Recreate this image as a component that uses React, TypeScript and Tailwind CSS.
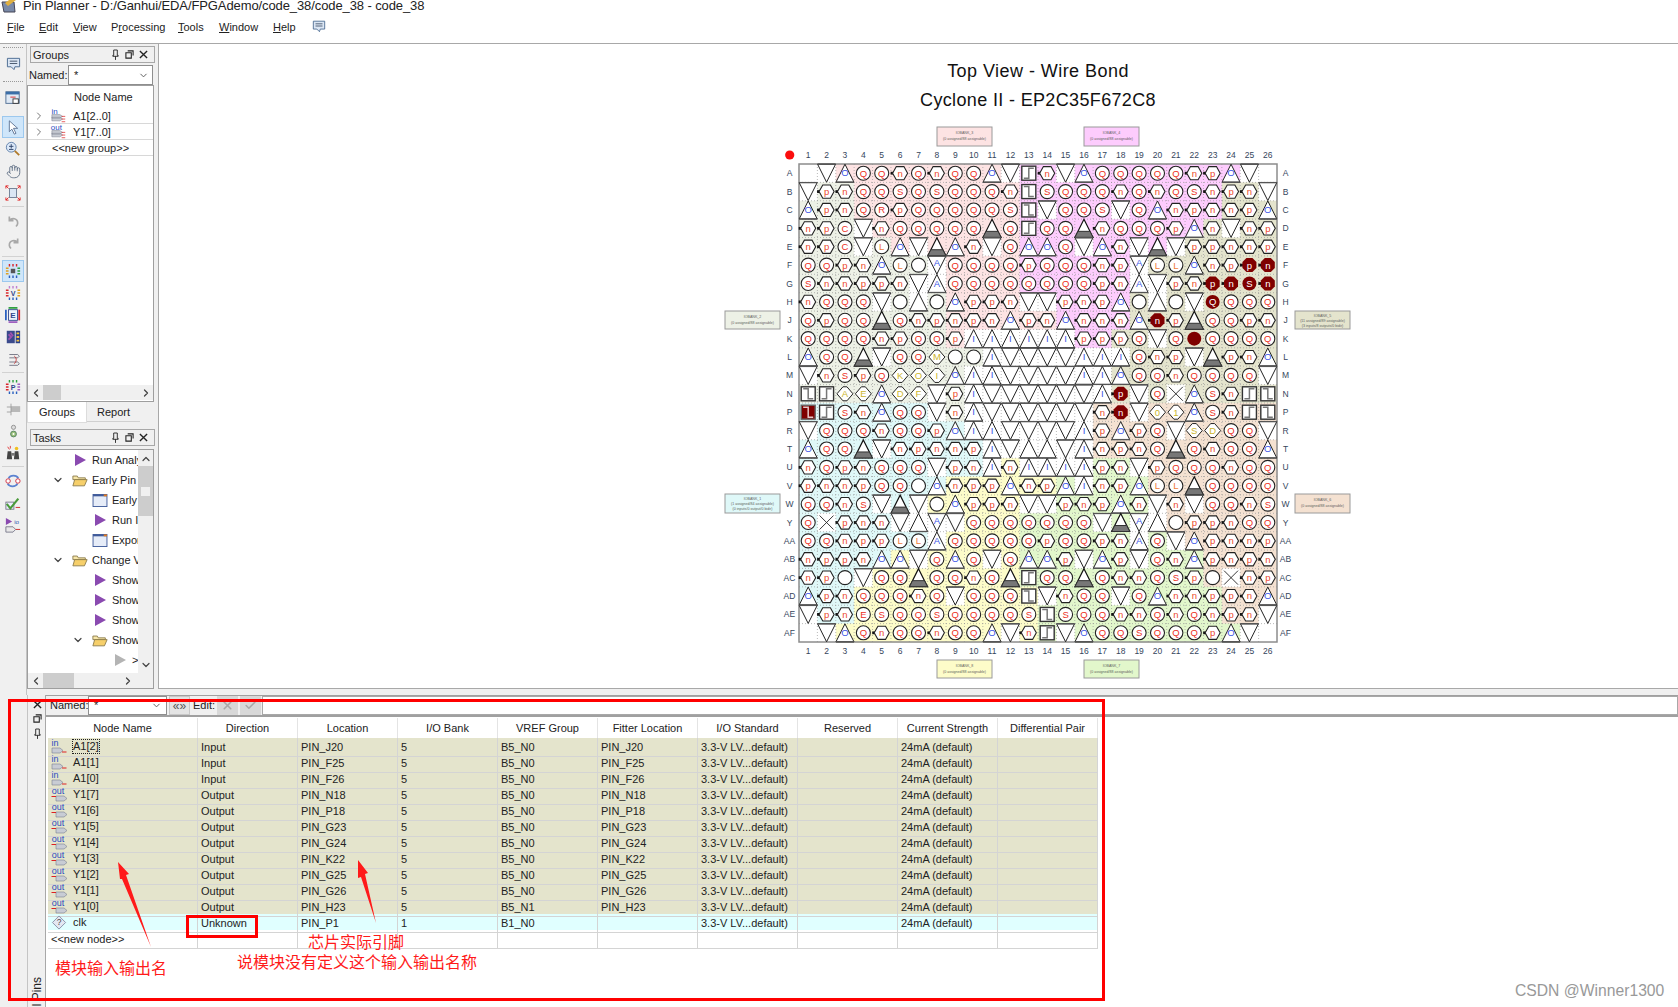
import React from 'react';
import { Check, ChevronDown, ChevronLeft, ChevronRight, ChevronUp, Hand, X } from 'lucide-react';

const FONT = "font-['Liberation_Sans',sans-serif]";

const CELL = 478 / 26;
const X0 = 799;
const Y0 = 164;

const ROW_NAMES = ['A', 'B', 'C', 'D', 'E', 'F', 'G', 'H', 'J', 'K', 'L', 'M', 'N', 'P', 'R', 'T', 'U', 'V', 'W', 'Y', 'AA', 'AB', 'AC', 'AD', 'AE', 'AF'];

// one token per ball: letter = circle, n/p = hex, u/v = triangles, g = ground, o = empty, x = nc, d* = diamond, N* = assigned
const PINS = [
  '. v uO Q Q n Q n Q Q uO v ckR n v uO Q Q Q Q Q n p uO v .',
  'v p n Q Q S Q S Q Q Q n ckF S Q Q Q n Q n Q S n p n v',
  'uO p n Q R p Q Q Q Q Q S ckF v Q Q S v Q uO n p n n p uO',
  'n p C v n Q Q Q Q Q g Q ckR Q Q g n Q Q Q p uO n v n p',
  'n p C v L uO v g uO n v Q uO uO Q v uO n v g v p p n n p',
  'Q Q p n uO L o vA Q Q Q Q p Q Q Q n p vA L L uO n p Np Nn',
  'S n n p p n v uA Q Q Q Q Q Q Q Q p n uA v p n Np Nn NS Nn',
  'n Q Q Q v o u o uO p p n v v p n p uO o u o v NQ Q Q Q',
  'Q p Q Q g Q n p n p n uO p n uO n n n uO Nn p g Q Q p n',
  'Q Q Q Q n p Q Q p uI uI uI uI uI uI p p p Q v Q N Q Q Q Q',
  'uO Q Q g v Q Q dM o o uI v v v v uI uI uI Q n p v g p n uO',
  'v n S p Q dK dO dI uO uI uI v v v v uI uI uO Q Q n Q Q Q Q v',
  'ckF ckR dA dE uO dD dF v p uI v v v v v v uI Np v Q x uO S n ckR ckF',
  'ckX ckR S n uO Q Q v n uI v v v v v v n Nn v d0 d1 uO S n ckR ckF',
  'v Q Q Q n Q Q p uO uI uI v v v v uI p uO p Q v dS dD Q Q v',
  'uO Q Q g v n p n n p uI v u u v uI n p n Q g Q n Q Q uO',
  'n Q p n Q Q Q v p n uI n uI uI uI uI p n v p Q Q Q n Q Q',
  'p n n p Q Q o uO n p p uO n p uO uI n p uO L L g Q Q Q Q',
  'Q Q n S v g v o uO p p n v v p n p uO n v n v Q Q n S',
  'Q x p n n v u vA v Q Q Q Q Q Q Q v g vA u o p p n Q Q',
  'Q Q n p p L L uA Q Q Q Q Q p Q Q p n uA Q v uO p n n p',
  'n p p n uO uO v Q uO Q v Q uO uO p v uO p v Q n uO p n p n',
  'n p o v Q Q g Q Q n Q g ckR Q Q g Q n n Q S p o x n p',
  'uO p n Q Q Q n Q v Q Q Q ckF v n Q Q v Q uO n n p p n uO',
  'v p n E S Q Q S Q Q Q Q S ckF S Q Q n n Q n Q n p n v',
  '. v uO Q n Q Q n Q Q uO v n ckR v uO Q Q S Q Q Q p uO v .',
].map((row) => row.split(' '));

const BANKS = [
  '0:2 3:10 4:12 0:2', '2:3 3:9 4:11 5:3', '2:3 3:9 4:11 5:3', '2:3 3:9 4:10 5:4',
  '2:5 3:7 4:8 5:6', '2:8 3:4 4:7 5:7', '2:8 3:4 4:7 5:7', '2:8 3:4 4:6 5:8',
  '2:8 3:6 4:4 5:8', '2:8 3:1 0:6 4:2 5:9', '2:10 0:8 5:8', '2:9 0:8 5:9',
  '2:9 0:8 5:9', '1:7 0:1 2:1 0:7 6:10', '1:9 0:7 6:10', '1:10 0:6 6:10',
  '1:11 8:1 0:4 7:3 6:7', '1:8 8:6 7:5 6:7', '1:7 8:5 0:2 7:6 6:6', '1:9 8:3 7:8 6:6',
  '1:8 8:4 7:9 6:5', '1:5 8:7 7:10 6:4', '1:3 8:9 7:10 6:4', '1:3 8:10 7:10 6:3',
  '1:3 8:10 7:10 6:3', '0:2 8:11 7:11 0:2',
].map((spec) => spec.split(' ').flatMap((part) => {
  const [bank, count] = part.split(':');
  return Array<string>(Number(count)).fill(bank);
}));

const BANK_FILL: Record<string, string> = {
  '0': '#ffffff', '1': '#dff8f8', '2': '#edf1e6', '3': '#fde3e3', '4': '#fdccfd',
  '5': '#e4e4cd', '6': '#f4e1d1', '7': '#e2f7cb', '8': '#fdfcc9',
};

const BANK_BOXES = [
  { x: 937, y: 127, h: 19, fill: '#fde3e3', lines: ['IOBANK_3', '(0 assigned/88 assignable)'] },
  { x: 1084, y: 127, h: 19, fill: '#fdccfd', lines: ['IOBANK_4', '(0 assigned/88 assignable)'] },
  { x: 725, y: 311, h: 18, fill: '#edf1e6', lines: ['IOBANK_2', '(0 assigned/88 assignable)'] },
  { x: 1295, y: 311, h: 18, fill: '#e4e4cd', lines: ['IOBANK_5', '(11 assigned/89 assignable)', '(3 inputs/8 outputs/0 bidir)'] },
  { x: 725, y: 494, h: 19, fill: '#dff8f8', lines: ['IOBANK_1', '(1 assigned/84 assignable)', '(0 inputs/0 output/0 bidir)'] },
  { x: 1295, y: 494, h: 19, fill: '#f4e1d1', lines: ['IOBANK_6', '(0 assigned/88 assignable)'] },
  { x: 937, y: 660, h: 18, fill: '#fdfcc9', lines: ['IOBANK_8', '(0 assigned/88 assignable)'] },
  { x: 1084, y: 660, h: 18, fill: '#e2f7cb', lines: ['IOBANK_7', '(0 assigned/88 assignable)'] },
];

const letterColor = (l: string) => {
  if (l === 'O' || l === 'I' || l === 'A') return '#3b55e6';
  if (l === 'L') return '#ef7d3c';
  return '#ec2f22';
};

function Label({ text, color, y = 3.4, size = 9.5 }: { text: string; color: string; y?: number; size?: number }) {
  return <text y={y} textAnchor="middle" fontSize={size} fill={color} fontFamily="Liberation Sans, sans-serif">{text}</text>;
}

function Pin({ t }: { t: string }) {
  if (t === '.') return null;
  const stroke = '#222';
  const hexPts = '-7.5,0 -3.8,-6.6 3.8,-6.6 7.5,0 3.8,6.6 -3.8,6.6';
  if (t === 'n' || t === 'p') {
    return (
      <g>
        <rect x={-9.5} y={-1.4} width={3} height={2.8} fill="#111" />
        <polygon points={hexPts} fill="#fff" stroke={stroke} strokeWidth={1.1} />
        <Label text={t} color="#ec4a2e" />
      </g>
    );
  }
  if (t === 'Nn' || t === 'Np') {
    return (
      <g>
        <rect x={-9.5} y={-1.4} width={3} height={2.8} fill="#111" />
        <polygon points="-7,-3 -3,-7 3,-7 7,-3 7,3 3,7 -3,7 -7,3" fill="#7f0000" />
        <Label text={t[1]} color="#fff" />
      </g>
    );
  }
  if (t === 'NS' || t === 'NQ' || t === 'N') {
    return (
      <g>
        <circle r={7} fill="#7f0000" />
        {t.length > 1 && <Label text={t[1]} color="#fff" />}
      </g>
    );
  }
  if (t === 'v' || t === 'vA') {
    return (
      <g>
        <polygon points="-9,-9 9,-9 0,9" fill="#fff" stroke={stroke} />
        <line x1={-9} y1={-9} x2={9} y2={-9} stroke="#555" strokeWidth={1.3} />
        {t === 'vA' && <Label text="A" color="#3b55e6" y={1} />}
      </g>
    );
  }
  if (t[0] === 'u') {
    return (
      <g>
        <polygon points="0,-9 9,9 -9,9" fill="#fff" stroke={stroke} />
        <line x1={-9} y1={9} x2={9} y2={9} stroke="#555" strokeWidth={1.3} />
        {t[1] && <Label text={t[1]} color="#3b55e6" y={3} />}
      </g>
    );
  }
  if (t === 'g') {
    return (
      <g>
        <polygon points="0,-9 9,9 -9,9" fill="#fff" stroke="#111" strokeWidth={1.2} />
        <polygon points="-6,3 6,3 9,9 -9,9" fill="#777" stroke="#333" />
      </g>
    );
  }
  if (t === 'o') return <circle r={7} fill="#fff" stroke={stroke} strokeWidth={1.1} />;
  if (t === 'x') {
    return (
      <g stroke="#222" strokeWidth={0.9}>
        <line x1={-7} y1={-7} x2={7} y2={7} />
        <line x1={7} y1={-7} x2={-7} y2={7} />
      </g>
    );
  }
  if (t.startsWith('ck')) {
    const filled = t === 'ckX';
    const rising = t === 'ckR';
    return (
      <g>
        <rect x={-7} y={-7} width={14} height={14} fill={filled ? '#7f0000' : '#fff'} stroke={filled ? '#666' : '#333'} strokeWidth={1.4} />
        <path d={rising ? 'M-5 5 H0 V-5 H5' : 'M-5 -5 H0 V5 H5'} fill="none" stroke={filled ? '#e6c8c8' : '#777'} strokeWidth={1.5} />
      </g>
    );
  }
  if (t[0] === 'd') {
    return (
      <g>
        <polygon points="-8,0 -2,-7 2,-7 8,0 2,7 -2,7" fill="#fff" stroke={stroke} />
        <Label text={t[1]} color="#cbb62e" />
      </g>
    );
  }
  return (
    <g>
      <circle r={7} fill="#fff" stroke={stroke} strokeWidth={1.1} />
      <Label text={t} color={letterColor(t)} />
    </g>
  );
}

function ChipDiagram() {
  const size = CELL * 26;
  return (
    <svg viewBox="658 120 760 565" className="block w-[760px] h-[565px]">
      {BANKS.map((row, r) => row.map((bank, c) => {
        const t = PINS[r][c];
        const white = t === 'v' || t === 'vA' || t === 'uI' || t === 'uA' || t === 'x' || t === 'u';
        return <rect key={`${r}-${c}`} x={X0 + c * CELL} y={Y0 + r * CELL} width={CELL + 0.3} height={CELL + 0.3} fill={white ? '#fff' : BANK_FILL[bank]} />;
      }))}
      {Array.from({ length: 25 }, (_, i) => (
        <g key={i} stroke="#8a8a8a" strokeWidth={0.6} strokeDasharray="1 2">
          <line x1={X0 + (i + 1) * CELL} y1={Y0} x2={X0 + (i + 1) * CELL} y2={Y0 + size} />
          <line x1={X0} y1={Y0 + (i + 1) * CELL} x2={X0 + size} y2={Y0 + (i + 1) * CELL} />
        </g>
      ))}
      <rect x={X0} y={Y0} width={size} height={size} fill="none" stroke="#8c8c8c" strokeWidth={1.5} />
      {PINS.map((row, r) => row.map((t, c) => (
        <g key={`${r}-${c}`} transform={`translate(${X0 + (c + 0.5) * CELL} ${Y0 + (r + 0.5) * CELL})`}>
          <Pin t={t} />
        </g>
      )))}
      <circle cx={789.7} cy={155} r={4.6} fill="#fb0d0d" />
      <g fontFamily="Liberation Sans, sans-serif" fontSize={8.5} fill="#35465c" textAnchor="middle">
        {Array.from({ length: 26 }, (_, i) => (
          <g key={i}>
            <text x={X0 + (i + 0.5) * CELL} y={158}>{i + 1}</text>
            <text x={X0 + (i + 0.5) * CELL} y={654}>{i + 1}</text>
          </g>
        ))}
        {ROW_NAMES.map((name, i) => (
          <g key={name}>
            <text x={789.5} y={Y0 + (i + 0.5) * CELL + 3}>{name}</text>
            <text x={1285.5} y={Y0 + (i + 0.5) * CELL + 3}>{name}</text>
          </g>
        ))}
      </g>
      {BANK_BOXES.map((box) => (
        <g key={box.lines[0]} fontFamily="Liberation Sans, sans-serif" fontSize={3.6} fill="#5f5f5f" textAnchor="middle">
          <rect x={box.x} y={box.y} width={55} height={box.h} fill={box.fill} stroke="#9a9a9a" strokeWidth={1} />
          {box.lines.map((line, i) => (
            <text key={line} x={box.x + 27.5} y={box.y + (box.lines.length === 3 ? 5.5 + i * 5.2 : 7 + i * 6.2)}>{line}</text>
          ))}
        </g>
      ))}
    </svg>
  );
}

// small toolbar glyphs
function Bubble({ className = 'w-[15px] h-[15px]' }: { className?: string }) {
  return (
    <svg viewBox="0 0 16 16" className={className}>
      <path d="M1.5 2.5h13v9h-5l-1 3-3-3h-4z" fill="#dbe6f4" stroke="#4a6a90" />
      <path d="M4 5.5h8M4 8h8" stroke="#44546a" />
    </svg>
  );
}

function PinGlyph() {
  return (
    <svg viewBox="0 0 10 12" className="w-[9px] h-[11px]">
      <path d="M3 1h4v6h1v1H2V7h1zM5 8v4" fill="none" stroke="#222" />
    </svg>
  );
}

function RestoreGlyph() {
  return (
    <svg viewBox="0 0 10 10" className="w-[9px] h-[9px]">
      <path d="M3 1h6v5M1 3h6v6H1z" fill="none" stroke="#222" strokeWidth={1.2} />
    </svg>
  );
}

function CloseGlyph() {
  return (
    <svg viewBox="0 0 10 10" className="w-[9px] h-[9px]">
      <path d="M1 1l8 8M9 1l-8 8" stroke="#222" strokeWidth={1.5} />
    </svg>
  );
}

function ChipTool({ mid, a, b, c, d }: { mid: string; a: string; b: string; c: string; d: string }) {
  return (
    <svg viewBox="0 0 18 18" className="w-[16px] h-[16px]">
      <path d="M5 1v3M9 1v3M13 1v3" stroke={a} strokeWidth={1.6} />
      <path d="M1 6h3M1 9h3M1 12h3" stroke={b} strokeWidth={1.6} />
      <path d="M14 6h3M14 9h3M14 12h3" stroke={c} strokeWidth={1.6} />
      <path d="M5 14v3M9 14v3M13 14v3" stroke={d} strokeWidth={1.6} />
      <text x={9} y={12} textAnchor="middle" fontSize={8} fontWeight={700} fill="#30468c" fontFamily="Liberation Sans, sans-serif">{mid}</text>
    </svg>
  );
}

const TOP_TOOL = (
  <svg viewBox="0 0 18 18" className="w-[16px] h-[16px]"><rect x="1" y="2" width="15" height="13" fill="#dfe9f5" stroke="#4a6a90" /><rect x="1" y="2" width="15" height="3" fill="#3a6ea8" /><rect x="9" y="10" width="6" height="5" fill="#fff" stroke="#333" /><path d="M6 8h6" stroke="#d22" /></svg>
);

const TOOL_GROUPS: React.ReactNode[][] = [
  [
    <svg key="b" viewBox="0 0 18 18" className="w-[15px] h-[15px]"><path d="M4 1l10 9H9l3 6-2 1-3-6-3 3z" fill="#fff" stroke="#51688a" /></svg>,
    <svg key="c" viewBox="0 0 18 18" className="w-[16px] h-[16px]"><circle cx="7" cy="7" r="5.5" fill="#dbe8f8" stroke="#5a7ba6" /><path d="M4.5 6h5M7 3.5v5M4.5 9.5h5" stroke="#2a3f66" /><path d="M11 11l5 5" stroke="#b07a2a" strokeWidth="2" /></svg>,
    <Hand key="d" className="w-[15px] h-[15px] text-[#5a6a80]" strokeWidth={1.4} />,
    <svg key="e" viewBox="0 0 18 18" className="w-[16px] h-[16px]"><rect x="5" y="4" width="8" height="10" fill="#dbe6f4" stroke="#6a7a90" /><path d="M1 1l3 3M17 1l-3 3M1 17l3-3M17 17l-3-3M1 1h3M1 1v3M17 1h-3M17 1v3M1 17h3M1 17v-3M17 17h-3M17 17v-3" stroke="#e02020" /></svg>,
  ],
  [
    <svg key="f" viewBox="0 0 18 18" className="w-[15px] h-[15px]"><path d="M4 3v5h5M4 8c3-4 10-3 10 3 0 2-1 3-2 4" fill="none" stroke="#a8a8a8" strokeWidth="2" /></svg>,
    <svg key="g" viewBox="0 0 18 18" className="w-[15px] h-[15px]"><path d="M14 3v5H9M14 8c-3-4-10-3-10 3 0 2 1 3 2 4" fill="none" stroke="#a8a8a8" strokeWidth="2" /></svg>,
  ],
  [
    <svg key="h" viewBox="0 0 18 18" className="w-[16px] h-[16px]"><path d="M5 1v3M9 1v3M13 1v3" stroke="#d8262c" strokeWidth="1.6" /><path d="M1 6h3M1 9h3M1 12h3" stroke="#e0a020" strokeWidth="1.6" /><path d="M14 6h3M14 9h3M14 12h3" stroke="#30a040" strokeWidth="1.6" /><path d="M5 14v3M9 14v3M13 14v3" stroke="#2a60c0" strokeWidth="1.6" /><rect x="6.5" y="6.5" width="5" height="5" fill="#555" /></svg>,
    <ChipTool key="i" mid="V" a="#c080d0" b="#d8262c" c="#e0a020" d="#2a60c0" />,
    <svg key="j" viewBox="0 0 18 18" className="w-[16px] h-[16px]"><rect x="4" y="3" width="10" height="12" fill="#eef3fa" stroke="#30468c" /><text x="9" y="12.5" textAnchor="middle" fontSize="9" fontWeight="700" fill="#30468c" fontFamily="Liberation Sans, sans-serif">E</text><path d="M1 3v12" stroke="#2a60c0" strokeWidth="2" /><path d="M16 3v12" stroke="#d8262c" strokeWidth="2" /><path d="M4 1h10" stroke="#30a040" strokeWidth="2" /><path d="M4 17h10" stroke="#a060c0" strokeWidth="2" /></svg>,
    <svg key="k" viewBox="0 0 18 18" className="w-[16px] h-[16px]"><rect x="2" y="2" width="9" height="14" fill="#3a4a8c" /><path d="M4 6l3 3-3 3M6 4l3 4" stroke="#a050b0" strokeWidth="2" fill="none" /><rect x="12" y="2" width="5" height="14" fill="#2a3f88" /><path d="M13 5h3M13 9h3M13 13h3" stroke="#f0c040" strokeWidth="2" /></svg>,
    <svg key="l" viewBox="0 0 18 18" className="w-[15px] h-[15px]"><path d="M4 3h10l2 2-2 2H4M4 12h10l2 2-2 2H4" fill="#eee" stroke="#667" /><path d="M10 5c3 2 3 6 0 9" fill="none" stroke="#c02020" /></svg>,
  ],
  [
    <ChipTool key="m" mid="P" a="#30a040" b="#d8262c" c="#a060c0" d="#2a60c0" />,
    <svg key="n" viewBox="0 0 18 18" className="w-[15px] h-[15px]"><rect x="6" y="5" width="11" height="7" fill="#b8b8b8" /><path d="M6 2v14M1 6h5M1 12h5" stroke="#999" /></svg>,
    <svg key="o" viewBox="0 0 18 18" className="w-[15px] h-[15px]"><circle cx="9" cy="4" r="2.5" fill="#ddd" stroke="#888" /><circle cx="9" cy="12" r="3.5" fill="#9ac07a" stroke="#4a7a5a" /><circle cx="9" cy="12" r="1.2" fill="#fff" /></svg>,
    <svg key="p" viewBox="0 0 18 18" className="w-[16px] h-[16px]"><path d="M3 7h4l1 9H2zM11 7h4l1 9h-6z" fill="#444" /><rect x="7" y="9" width="4" height="3" fill="#777" /><path d="M3 2l2 3M6 1v3" stroke="#e03030" /><circle cx="13" cy="4" r="2" fill="#f0c020" /></svg>,
  ],
  [
    <svg key="q" viewBox="0 0 18 18" className="w-[16px] h-[16px]"><path d="M4 6c2-4 9-4 11 0M14 12c-2 4-9 4-11 0" fill="none" stroke="#5a82d0" strokeWidth="2" /><circle cx="3.5" cy="9" r="2.5" fill="#fff" stroke="#d02a3a" /><circle cx="14.5" cy="9" r="2.5" fill="#fff" stroke="#d02a3a" /></svg>,
    <svg key="r" viewBox="0 0 18 18" className="w-[16px] h-[16px]"><rect x="1" y="8" width="9" height="8" fill="#eef" stroke="#778" /><path d="M2 10l4 5 9-11" fill="none" stroke="#4a9a3a" strokeWidth="2.4" /><path d="M12 14h5" stroke="#d02020" /></svg>,
    <svg key="s" viewBox="0 0 18 18" className="w-[16px] h-[16px]"><path d="M1 1l7 4-7 4z" fill="#8a4ab0" /><path d="M1 11h8l3 3-3 3H1z" fill="#e8e8e8" stroke="#778" /><path d="M12 14h5" stroke="#d02020" /><text x="13" y="8" textAnchor="middle" fontSize="7" fill="#3a5ab0" fontFamily="Liberation Sans, sans-serif">io</text></svg>,
  ],
];

function LeftToolbar() {
  return (
    <div className="w-[27px] shrink-0 border-r border-[#c4c4c4] bg-[#f0f0f0] flex flex-col items-center">
      <div className="h-[2px] w-[20px] mt-[3px] border-t border-dotted border-[#9a9a9a]" />
      <div className="h-[26px] flex items-center mt-[1px]"><Bubble /></div>
      <div className="h-[2px] w-[20px] mt-[5px] mb-[4px] border-t border-dotted border-[#9a9a9a]" />
      <div className="w-[22px] h-[22px] mb-[7px] flex items-center justify-center">{TOP_TOOL}</div>
      {TOOL_GROUPS.map((group, g) => (
        <div key={g} className={g > 0 ? 'mt-[2px] pt-[3px] w-[22px] border-t border-[#d2d2d2] flex flex-col items-center' : 'flex flex-col items-center'}>
          {group.map((icon, i) => {
            const active = (g === 0 && i === 0) || (g === 2 && i === 0);
            return (
              <div key={i} className={`w-[22px] h-[22px] flex items-center justify-center border ${active ? 'bg-[#cfe6fa] border-[#9cc8ee]' : 'border-transparent'}`}>
                {icon}
              </div>
            );
          })}
        </div>
      ))}
    </div>
  );
}

function PanelHeader({ title }: { title: string }) {
  return (
    <div className="mx-[3px] h-[17px] px-[2px] border border-[#a8a8a8] bg-[#f0f0f0] flex items-center text-[#222]">
      <span className="flex-1 pt-[2px]">{title}</span>
      <span className="flex items-center gap-[5px] pr-[4px]"><PinGlyph /><RestoreGlyph /><CloseGlyph /></span>
    </div>
  );
}

function Scrollbar({ thumb, left, right }: { thumb: number; left: number; right: number }) {
  return (
    <div className="h-[15px] bg-[#f0f0f0] flex items-center">
      <ChevronLeft className="ml-[2px] w-[12px] h-[12px] text-[#444]" strokeWidth={2.5} />
      <div className="bg-[#cdcdcd] h-[15px]" style={{ marginLeft: left, width: thumb }} />
      <div className="flex-1" />
      <ChevronRight className="w-[12px] h-[12px] text-[#444]" strokeWidth={2.5} style={{ marginRight: right }} />
    </div>
  );
}

function GroupIcon({ out }: { out?: boolean }) {
  return (
    <svg viewBox="0 0 18 16" className="w-[16px] h-[15px] shrink-0 overflow-visible">
      <text x={out ? 6 : 4} y={6} textAnchor="middle" fontSize={9} fill="#2a4ac0" fontFamily="Liberation Sans, sans-serif">{out ? 'out' : 'in'}</text>
      <path d="M1 7h9l3 2-3 2H1zM1 10h9l3 2-3 2H1z" fill="#c8ccd4" stroke="#7a8090" strokeWidth={0.6} />
      <path d="M12 9h4M12 12h4M12 15h4" stroke="#d22" strokeWidth={0.8} />
    </svg>
  );
}

const TASKS: { kind: 'run' | 'folder' | 'win' | 'gray'; level: number; label: string }[] = [
  { kind: 'run', level: 0, label: 'Run Analysis' },
  { kind: 'folder', level: 0, label: 'Early Pin Planning' },
  { kind: 'win', level: 1, label: 'Early Pin Planning...' },
  { kind: 'run', level: 1, label: 'Run I/O Assignment' },
  { kind: 'win', level: 1, label: 'Export Pin Assignments' },
  { kind: 'folder', level: 0, label: 'Change View' },
  { kind: 'run', level: 1, label: 'Show Pads' },
  { kind: 'run', level: 1, label: 'Show Pin' },
  { kind: 'run', level: 1, label: 'Show Bank' },
  { kind: 'folder', level: 1, label: 'Show Other' },
  { kind: 'gray', level: 2, label: '>' },
];

function TaskIcon({ kind }: { kind: string }) {
  if (kind === 'folder') {
    return (
      <svg viewBox="0 0 18 14" className="w-[16px] h-[13px]">
        <path d="M1 2h5l1 2h8v2H1z" fill="#f7e6a8" stroke="#8a7a4a" />
        <path d="M3 6h14l-3 7H1z" fill="#f6cf6a" stroke="#8a7a4a" />
      </svg>
    );
  }
  if (kind === 'win') {
    return (
      <svg viewBox="0 0 16 14" className="w-[16px] h-[13px]">
        <rect x="0.5" y="0.5" width="15" height="13" fill="#e6ecf8" stroke="#3f5a9a" />
        <rect x="0.5" y="0.5" width="15" height="2" fill="#3f5a9a" />
        <rect x="12" y="0.5" width="3.5" height="2" fill="#e07a20" />
      </svg>
    );
  }
  return (
    <svg viewBox="0 0 11 12" className="w-[11px] h-[12px]">
      <path d="M0 0l11 6-11 6z" fill={kind === 'gray' ? '#b4b4b4' : '#8a4ab0'} />
    </svg>
  );
}

function LeftPanel() {
  return (
    <div className="w-[131px] shrink-0 bg-[#f0f0f0] flex flex-col text-[11px] text-[#222]">
      <div className="h-[2px]" />
      <PanelHeader title="Groups" />
      <div className="h-[22px] flex items-center pl-[2px] pt-[2px]">
        <span className="w-[39px]">Named:</span>
        <div className="w-[85px] h-[20px] bg-white border border-[#8e8e8e] flex items-center pl-[5px]">
          <span className="flex-1">*</span>
          <ChevronDown className="w-[11px] h-[11px] mr-[3px] text-[#555]" />
        </div>
      </div>
      <div className="h-[317px] w-[127px] bg-white border border-[#9e9e9e] flex flex-col pb-[1px]">
        <div className="h-[22px] pl-[46px] flex items-center">Node Name</div>
        {[
          { label: 'A1[2..0]', out: false },
          { label: 'Y1[7..0]', out: true },
        ].map((row) => (
          <div key={row.label} className="h-[16px] border-b border-[#d8d8d8] flex items-center">
            <ChevronRight className="ml-[5px] w-[12px] h-[12px] text-[#777]" />
            <span className="ml-[6px]"><GroupIcon out={row.out} /></span>
            <span className="ml-[6px] pt-[2px]">{row.label}</span>
          </div>
        ))}
        <div className="h-[16px] border-b border-[#d8d8d8] pl-[24px] pt-[1px] flex items-center">&lt;&lt;new group&gt;&gt;</div>
        <div className="flex-1" />
        <Scrollbar thumb={18} left={1} right={1} />
      </div>
      <div className="h-[27px] flex items-start">
        <div className="w-[60px] h-[21px] pt-[1px] bg-white border border-t-0 border-[#dcdcdc] flex items-center justify-center">Groups</div>
        <div className="w-[53px] h-[20px] pt-[1px] border-b border-[#d0d0d0] flex items-center justify-center">Report</div>
      </div>
      <PanelHeader title="Tasks" />
      <div className="mt-[3px] h-[240px] w-[127px] bg-white border border-[#9e9e9e] flex flex-col">
        <div className="flex flex-1 min-h-0">
          <div className="flex-1 overflow-hidden">
            {TASKS.map((task) => (
              <div key={task.label} className="h-[20px] flex items-center whitespace-nowrap" style={{ paddingLeft: 22 + task.level * 20 }}>
                <span className="w-[16px] shrink-0 flex justify-center">
                  {task.kind === 'folder' && <ChevronDown className="w-[12px] h-[12px] text-[#444]" strokeWidth={2.4} />}
                </span>
                <span className="ml-[5px] w-[18px] shrink-0 flex justify-center"><TaskIcon kind={task.kind} /></span>
                <span className="ml-[3px]">{task.label}</span>
              </div>
            ))}
          </div>
          <div className="w-[15px] shrink-0 bg-[#f0f0f0] flex flex-col items-center">
            <ChevronUp className="w-[12px] h-[12px] mt-[3px] text-[#444]" strokeWidth={2.4} />
            <div className="w-full h-[50px] mt-[1px] bg-[#cdcdcd] flex items-center justify-center"><div className="w-[9px] h-[9px] bg-[#f0f0f0]" /></div>
            <div className="flex-1" />
            <ChevronDown className="w-[12px] h-[12px] mb-[2px] text-[#444]" strokeWidth={2.4} />
          </div>
        </div>
        <Scrollbar thumb={31} left={1} right={19} />
      </div>
    </div>
  );
}

const COLUMNS = ['Node Name', 'Direction', 'Location', 'I/O Bank', 'VREF Group', 'Fitter Location', 'I/O Standard', 'Reserved', 'Current Strength', 'Differential Pair'];

const NODES = [
  { name: 'A1[2]', dir: 'Input', loc: 'PIN_J20', vref: 'B5_N0' },
  { name: 'A1[1]', dir: 'Input', loc: 'PIN_F25', vref: 'B5_N0' },
  { name: 'A1[0]', dir: 'Input', loc: 'PIN_F26', vref: 'B5_N0' },
  { name: 'Y1[7]', dir: 'Output', loc: 'PIN_N18', vref: 'B5_N0' },
  { name: 'Y1[6]', dir: 'Output', loc: 'PIN_P18', vref: 'B5_N0' },
  { name: 'Y1[5]', dir: 'Output', loc: 'PIN_G23', vref: 'B5_N0' },
  { name: 'Y1[4]', dir: 'Output', loc: 'PIN_G24', vref: 'B5_N0' },
  { name: 'Y1[3]', dir: 'Output', loc: 'PIN_K22', vref: 'B5_N0' },
  { name: 'Y1[2]', dir: 'Output', loc: 'PIN_G25', vref: 'B5_N0' },
  { name: 'Y1[1]', dir: 'Output', loc: 'PIN_G26', vref: 'B5_N0' },
  { name: 'Y1[0]', dir: 'Output', loc: 'PIN_H23', vref: 'B5_N1' },
];

function NodeIcon({ dir }: { dir: string }) {
  if (dir === 'Unknown') {
    return (
      <svg viewBox="0 0 16 16" className="w-[16px] h-[15px]">
        <path d="M8 1l7 7-7 7-7-7z" fill="#e4e8f2" stroke="#8890a8" />
        <text x="8" y="11" textAnchor="middle" fontSize="9" fill="#444" fontFamily="Liberation Sans, sans-serif">?</text>
      </svg>
    );
  }
  const isIn = dir === 'Input';
  return (
    <svg viewBox="0 0 16 16" className="w-[16px] h-[16px]">
      <text x={isIn ? 4 : 7} y={7} textAnchor="middle" fontSize={9} fill="#2a4ac0" fontFamily="Liberation Sans, sans-serif">{isIn ? 'in' : 'out'}</text>
      {isIn ? (
        <>
          <path d="M1 9h8l3 2.5L9 14H1z" fill="#c8ccd4" stroke="#7a8090" strokeWidth={0.6} />
          <path d="M11 13h4.5" stroke="#d22" />
        </>
      ) : (
        <>
          <path d="M5 9h8l3 2.5-3 2.5H5z" fill="#c8ccd4" stroke="#7a8090" strokeWidth={0.6} />
          <path d="M0.5 9.5h4.5" stroke="#d22" />
        </>
      )}
    </svg>
  );
}

function TableRow({ node, bg, bank, fitter }: { node: (typeof NODES)[number]; bg: string; bank: string; fitter: string }) {
  const cells = [node.dir, node.loc, bank, node.vref, fitter, '3.3-V LV...default)', '', '24mA (default)', ''];
  return (
    <div className={`grid grid-cols-[150px_repeat(9,100px)] h-[16px] ${bg}`}>
      <div className="border-r border-b border-[#d4d4d4] flex items-center pl-[3px]">
        <NodeIcon dir={node.dir} />
        <span className={`ml-[6px] leading-[13px] ${node.name === 'A1[2]' ? 'outline-1 outline-dotted outline-[#222]' : ''}`}>{node.name}</span>
      </div>
      {cells.map((cell, i) => (
        <div key={i} className="border-r border-b border-[#d4d4d4] pl-[3px] pt-[1px] flex items-center whitespace-nowrap">{cell}</div>
      ))}
    </div>
  );
}

function BottomPanel() {
  return (
    <div className="h-[312px] flex bg-[#f0f0f0] text-[11px] text-[#222]">
      <div className="w-[28px] shrink-0 border-r border-[#c4c4c4]" />
      <div className="w-[18px] shrink-0 border-r border-[#a8a8a8] flex flex-col items-center pl-[1px] pt-[5px] gap-[5px]">
        <CloseGlyph />
        <RestoreGlyph />
        <PinGlyph />
        <div className="mt-auto -mb-[10px] [writing-mode:vertical-rl] rotate-180 text-[12px] leading-[14px] whitespace-nowrap">All Pins</div>
      </div>
      <div className="flex-1 min-w-0 flex flex-col border-t border-[#a0a0a0]">
        <div className="h-[19px] flex items-center pl-[4px]">
          <span className="w-[38px]">Named:</span>
          <div className="w-[79px] h-[19px] bg-white border border-[#8e8e8e] flex items-center pl-[5px]">
            <span className="flex-1">*</span>
            <ChevronDown className="w-[11px] h-[11px] mr-[4px] text-[#555]" />
          </div>
          <div className="ml-[2px] w-[21px] h-[19px] bg-[#e4e4e4] border border-[#c8c8c8] flex items-center justify-center text-[#555] text-[12px]">&laquo;&raquo;</div>
          <span className="ml-[3px] w-[22px]">Edit:</span>
          <div className="ml-[2px] w-[21px] h-[19px] bg-[#d8d8d8] flex items-center justify-center"><X className="w-[13px] h-[13px] text-[#a8a8a8]" strokeWidth={3} /></div>
          <div className="ml-[2px] w-[21px] h-[19px] bg-[#d8d8d8] flex items-center justify-center"><Check className="w-[13px] h-[13px] text-[#a8a8a8]" strokeWidth={3} /></div>
          <div className="ml-[1px] flex-1 h-[19px] bg-white border border-[#a8a8a8]" />
        </div>
        <div className="h-[1px] bg-[#a0a0a0]" />
        <div className="flex-1 bg-white pl-[2px] border-t border-[#a0a0a0]">
          <div className="w-[1050px]">
            <div className="grid grid-cols-[150px_repeat(9,100px)] h-[21px] border-t border-white">
              {COLUMNS.map((col) => (
                <div key={col} className="border-r border-[#e4e4e4] flex items-center justify-center">{col}</div>
              ))}
            </div>
            {NODES.map((node) => (
              <TableRow key={node.name} node={node} bg="bg-[#e4e4cc]" bank="5" fitter={node.loc} />
            ))}
            <TableRow node={{ name: 'clk', dir: 'Unknown', loc: 'PIN_P1', vref: 'B1_N0' }} bg="bg-[#e0ffff]" bank="1" fitter="" />
            <div className="grid grid-cols-[150px_repeat(9,100px)] h-[16px]">
              <div className="border-r border-b border-[#d4d4d4] pl-[3px] pt-[1px] flex items-center">&lt;&lt;new node&gt;&gt;</div>
              {Array.from({ length: 9 }, (_, i) => <div key={i} className="border-r border-b border-[#d4d4d4]" />)}
            </div>
          </div>
        </div>
      </div>
    </div>
  );
}

const MENU = [
  { pre: '', key: 'F', post: 'ile', w: 32 },
  { pre: '', key: 'E', post: 'dit', w: 34 },
  { pre: '', key: 'V', post: 'iew', w: 38 },
  { pre: 'P', key: 'r', post: 'ocessing', w: 67 },
  { pre: '', key: 'T', post: 'ools', w: 41 },
  { pre: '', key: 'W', post: 'indow', w: 54 },
  { pre: '', key: 'H', post: 'elp', w: 39 },
];

export default function App() {
  return (
    <div className={`relative w-[1678px] h-[1007px] overflow-hidden bg-white flex flex-col ${FONT}`}>
      {/* Title bar, cut off at the top of the capture */}
      <div className="h-[16px] flex items-center overflow-hidden text-[13px] text-[#222] whitespace-nowrap">
        <svg viewBox="0 0 16 16" className="w-[16px] h-[16px] -mt-[6px] ml-[1px]">
          <path d="M1 5h12l1 10H3z" fill="#7a8aa8" stroke="#445" />
          <path d="M4 6l8-6 3 3-8 6z" fill="#e0b040" />
        </svg>
        <span className="ml-[6px] -mt-[4px] tracking-[-0.1px]">Pin Planner - D:/Ganhui/EDA/FPGAdemo/code_38/code_38 - code_38</span>
      </div>

      <div className="h-[28px] flex items-center pl-[7px] pb-[4px] text-[11px] text-[#222] border-b border-[#a8a8a8]">
        {MENU.map((m) => (
          <span key={m.post} className="shrink-0" style={{ width: m.w }}>{m.pre}<u>{m.key}</u>{m.post}</span>
        ))}
        <Bubble className="w-[14px] h-[14px] -mt-[4px]" />
      </div>

      <div className="h-[651px] flex bg-[#f0f0f0]">
        <LeftToolbar />
        <LeftPanel />
        <div className="flex-1 h-[645px] bg-white border-l border-b border-[#a8a8a8]">
          <div className="w-[760px] ml-[499px] text-center text-[#111] text-[18px] leading-[29px]">
            <div className="pt-[13px] h-[42px] tracking-[0.45px]">Top View - Wire Bond</div>
            <div className="h-[29px] tracking-[0.35px]">Cyclone II - EP2C35F672C8</div>
            <div className="h-[5px]" />
            <ChipDiagram />
          </div>
        </div>
      </div>

      <BottomPanel />

      {/* Red annotations drawn over the screenshot */}
      <div className="absolute left-[8px] top-[699px] w-[1097px] h-[302px] border-[3px] border-[#ff0000]" />
      <div className="absolute left-[186px] top-[915px] w-[72px] h-[23px] border-[3px] border-[#ff0000]" />
      <svg className="absolute left-0 top-0 w-[1678px] h-[1007px] pointer-events-none" viewBox="0 0 1678 1007">
        <polygon points="118,862 129,874 126,875 151,947 122,879 120,879" fill="#ff1a1a" />
        <polygon points="358,860 368,873 365,874 376,923 361,877 358,878" fill="#ff1a1a" />
      </svg>
      <div className="absolute left-[308px] top-[930px] text-[16px] leading-[22px] text-[#ff1a1a] font-['Noto_Sans_CJK_SC',sans-serif]">芯片实际引脚</div>
      <div className="absolute left-[237px] top-[950px] text-[16px] leading-[22px] text-[#ff1a1a] font-['Noto_Sans_CJK_SC',sans-serif]">说模块没有定义这个输入输出名称</div>
      <div className="absolute left-[55px] top-[956px] text-[16px] leading-[22px] text-[#ff1a1a] font-['Noto_Sans_CJK_SC',sans-serif]">模块输入输出名</div>
      <div className="absolute left-[1515px] top-[982px] text-[15.7px] leading-[18px] text-[#999999]">CSDN @Winner1300</div>
    </div>
  );
}
